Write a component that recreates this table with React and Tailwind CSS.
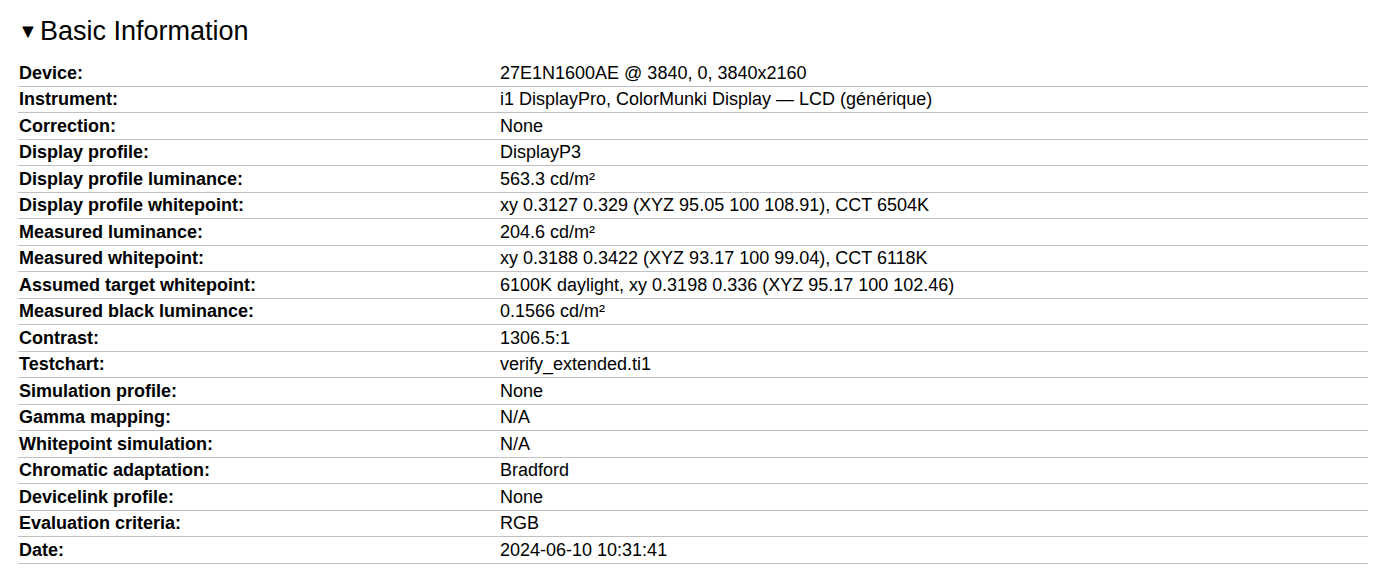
import React from 'react';

const rows = [
  ['Device:', '27E1N1600AE @ 3840, 0, 3840x2160'],
  ['Instrument:', 'i1 DisplayPro, ColorMunki Display — LCD (générique)'],
  ['Correction:', 'None'],
  ['Display profile:', 'DisplayP3'],
  ['Display profile luminance:', '563.3 cd/m²'],
  ['Display profile whitepoint:', 'xy 0.3127 0.329 (XYZ 95.05 100 108.91), CCT 6504K'],
  ['Measured luminance:', '204.6 cd/m²'],
  ['Measured whitepoint:', 'xy 0.3188 0.3422 (XYZ 93.17 100 99.04), CCT 6118K'],
  ['Assumed target whitepoint:', '6100K daylight, xy 0.3198 0.336 (XYZ 95.17 100 102.46)'],
  ['Measured black luminance:', '0.1566 cd/m²'],
  ['Contrast:', '1306.5:1'],
  ['Testchart:', 'verify_extended.ti1'],
  ['Simulation profile:', 'None'],
  ['Gamma mapping:', 'N/A'],
  ['Whitepoint simulation:', 'N/A'],
  ['Chromatic adaptation:', 'Bradford'],
  ['Devicelink profile:', 'None'],
  ['Evaluation criteria:', 'RGB'],
  ['Date:', '2024-06-10 10:31:41'],
];

const App = () => {
  return (
    <div className="min-h-screen bg-white text-black font-['Liberation_Sans',Arial,sans-serif]">
      <div className="px-[18px] pt-[13px]">
        <h2 className="flex items-center text-[27px] leading-[36px] font-normal">
          <span className="w-[22px] shrink-0 text-[20px] leading-none">▼</span>
          Basic Information
        </h2>
        <div className="mt-[11px] w-[1350px]">
          {rows.map(([label, value]) => (
            <div
              key={label}
              className="grid grid-cols-[482px_1fr] items-center h-[26.5px] border-b border-[#c0c0c0] text-[18px] leading-[22px]"
            >
              <div className="font-bold pl-[1px]">{label}</div>
              <div>{value}</div>
            </div>
          ))}
        </div>
      </div>
    </div>
  );
};

export default App;
